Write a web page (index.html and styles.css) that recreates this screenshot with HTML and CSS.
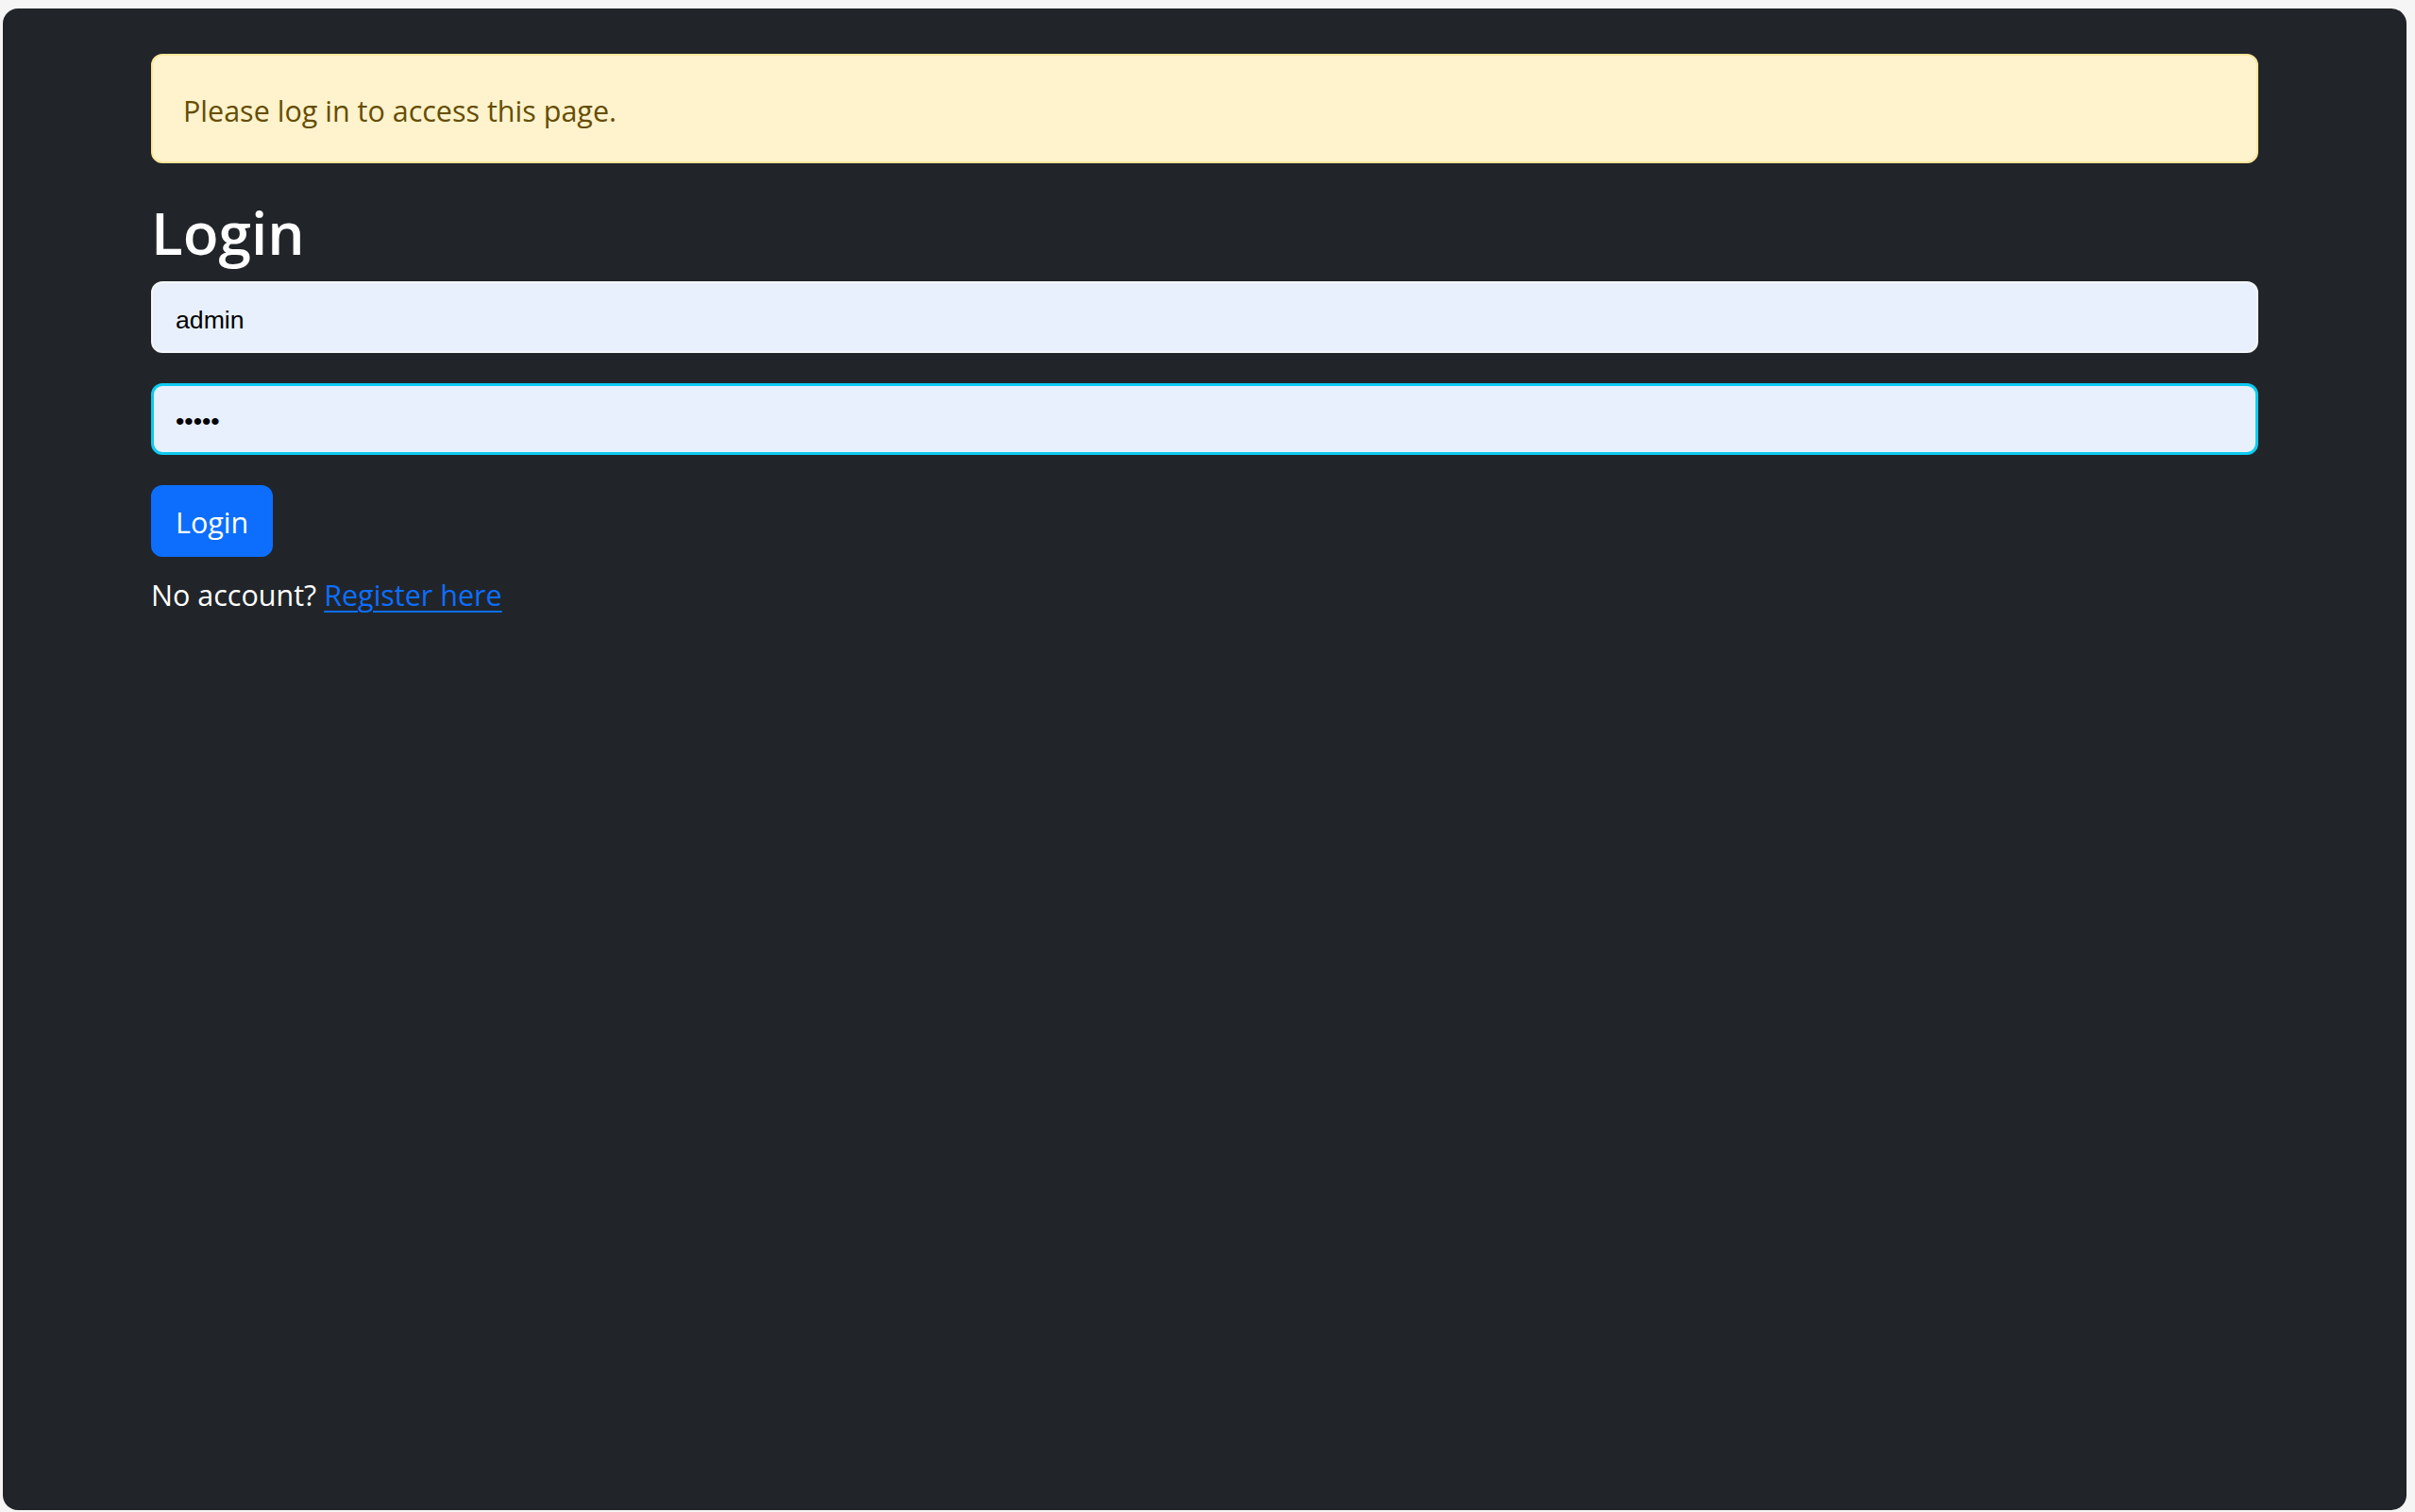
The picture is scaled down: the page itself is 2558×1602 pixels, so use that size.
FILE: index.html
```html
<!DOCTYPE html>
<html lang="en">
<head>
<meta charset="utf-8">
<title>Login</title>
<link rel="stylesheet" href="styles.css">
</head>
<body>
<div class="panel">
  <main class="container">
    <div class="alert">Please log in to access this page.</div>
    <h2 class="title">Login</h2>
    <form class="login-form">
      <input class="field" type="text" name="username" value="admin">
      <input class="field field-focus" type="password" name="password" value="admin">
      <button class="btn" type="button">Login</button>
    </form>
    <p class="note">No account? <a href="#" class="link">Register here</a></p>
  </main>
</div>
</body>
</html>
```
FILE: styles.css
```css
* { box-sizing: border-box; }
html, body { margin: 0; padding: 0; }
body {
  background: #f5f5f5;
  font-family: "Open Sans", "Noto Sans", sans-serif;
  color: #ffffff;
}
.panel {
  margin: 9px 9px 2px 3px;
  min-height: calc(100vh - 11px);
  background: #212529;
  border-radius: 16px;
}
.container {
  width: 2232px;
  margin: 0 auto;
  padding-top: 48px;
}
.alert {
  background: #fff3cd;
  border: 2px solid #ffe69c;
  color: #664d03;
  border-radius: 12px;
  padding: 34px 32px 30px 32px;
  font-size: 30.5px;
  line-height: 48px;
  margin-bottom: 32px;
}
.title {
  margin: 0 0 13px 0;
  padding-top: 3px;
  font-size: 62px;
  font-weight: 600;
  line-height: 77px;
  color: #ffffff;
}
.login-form {
  display: flex;
  flex-direction: column;
  align-items: flex-start;
  gap: 32px;
}
.field {
  width: 100%;
  height: 76px;
  margin: 0;
  padding: 6px 24px 0 24px;
  border: 2px solid #f4f6f8;
  border-radius: 12px;
  background: #e8f0fe;
  color: #000;
  font-family: "Liberation Sans", Arial, sans-serif;
  font-size: 26.67px;
  outline: none;
}
.field-focus {
  border: 3px solid #0dcaf0;
  padding: 4px 23px 0 23px;
}
.btn {
  height: 76px;
  padding: 1px 24px 0 24px;
  border: 2px solid #0d6efd;
  border-radius: 12px;
  background: #0d6efd;
  color: #ffffff;
  font-family: "Open Sans", "Noto Sans", sans-serif;
  font-size: 30.5px;
  line-height: 48px;
  cursor: pointer;
}
.note {
  margin: 12px 0 0 0;
  padding-top: 4px;
  font-size: 30.5px;
  line-height: 48px;
}
.link {
  color: #0d6efd;
  text-decoration: underline;
  text-underline-offset: 5px;
  text-decoration-thickness: 2px;
}
```
